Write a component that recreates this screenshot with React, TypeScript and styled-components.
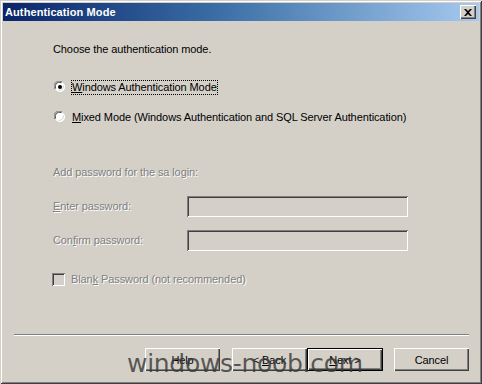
import * as React from "react";
import styled, { createGlobalStyle } from "styled-components";

const Global = createGlobalStyle`
  html, body {
    margin: 0;
    padding: 0;
    background: #d4d0c8;
  }
  body {
    font-family: "Liberation Sans", Arial, sans-serif;
    font-size: 11px;
    letter-spacing: -0.1px;
  }
`;

const Window = styled.div`
  position: relative;
  width: 482px;
  height: 384px;
  box-sizing: border-box;
  background: #d4d0c8;
  box-shadow: inset 1px 1px #d4d0c8, inset -1px -1px #404040,
    inset 2px 2px #ffffff, inset -2px -2px #808080;
  display: flex;
  flex-direction: column;
  overflow: hidden;
  color: #000;
`;

const Caption = styled.div`
  margin: 3px 3px 0 3px;
  height: 18px;
  display: flex;
  align-items: center;
  justify-content: space-between;
  padding: 0 3px 0 2px;
  background: linear-gradient(to right, #0a246a 0%, #3a6ea5 45%, #a6caf0 100%);
`;

const CaptionText = styled.span`
  color: #fff;
  font-weight: bold;
  font-size: 11px;
  letter-spacing: 0.1px;
`;

const CaptionButton = styled.div`
  width: 16px;
  height: 14px;
  box-sizing: border-box;
  background: #d4d0c8;
  box-shadow: inset 1px 1px #fff, inset -1px -1px #404040,
    inset -2px -2px #808080;
  display: flex;
  align-items: center;
  justify-content: center;
`;

const Body = styled.div`
  flex: 1;
  display: flex;
  flex-direction: column;
  padding: 22px 0 0 53px;
`;

const Text = styled.div<{ $disabled?: boolean }>`
  height: 13px;
  line-height: 13px;
  white-space: nowrap;
  color: ${(p) => (p.$disabled ? "#808080" : "#000")};
  text-shadow: ${(p) => (p.$disabled ? "1px 1px 0 #ffffff" : "none")};
`;

const Option = styled.div<{ $top: number }>`
  margin-top: ${(p) => p.$top}px;
  height: 16px;
  display: flex;
  align-items: center;
  margin-left: 1px;
`;

const OptionLabel = styled.span<{ $focus?: boolean }>`
  margin-left: 5px;
  padding: 1px 1px 1px 1px;
  line-height: 13px;
  outline: ${(p) => (p.$focus ? "1px dotted #000" : "none")};
  outline-offset: -1px;
  white-space: nowrap;
`;

const Field = styled.div<{ $top: number }>`
  margin-top: ${(p) => p.$top}px;
  display: grid;
  grid-template-columns: 134px 221px;
  align-items: center;
  height: 21px;
`;

const Edit = styled.div`
  height: 21px;
  box-sizing: border-box;
  background: #d4d0c8;
  box-shadow: inset 1px 1px #808080, inset -1px -1px #ffffff,
    inset 2px 2px #404040, inset -2px -2px #d4d0c8;
`;

const CheckRow = styled.div`
  margin-top: 22px;
  display: flex;
  align-items: center;
  height: 13px;
  margin-left: -1px;
`;

const CheckBox = styled.div`
  width: 13px;
  height: 13px;
  box-sizing: border-box;
  background: #d4d0c8;
  box-shadow: inset 1px 1px #808080, inset -1px -1px #ffffff,
    inset 2px 2px #404040, inset -2px -2px #d4d0c8;
  margin-right: 6px;
`;

const Separator = styled.div`
  margin: 47px 13px 0 14px;
  height: 2px;
  border-top: 1px solid #808080;
  border-bottom: 1px solid #ffffff;
  box-sizing: border-box;
`;

const ButtonBar = styled.div`
  margin-top: 12px;
  display: flex;
  justify-content: flex-end;
  padding-right: 13px;
`;

const Button = styled.div<{ $default?: boolean; $gap: number }>`
  width: ${(p) => (p.$default ? 76 : 75)}px;
  height: 23px;
  margin-left: ${(p) => p.$gap}px;
  box-sizing: border-box;
  display: flex;
  align-items: center;
  justify-content: center;
  background: #d4d0c8;
  font-size: 11px;
  box-shadow: ${(p) =>
    p.$default
      ? "inset 1px 1px #000, inset -1px -1px #000, inset 2px 2px #fff, inset -2px -2px #404040, inset -3px -3px #808080"
      : "inset 1px 1px #fff, inset -1px -1px #404040, inset -2px -2px #808080"};
`;

const Watermark = styled.div`
  position: absolute;
  left: 127px;
  top: 344px;
  font-family: "DejaVu Sans", "Liberation Sans", sans-serif;
  font-size: 25px;
  line-height: 40px;
  color: rgba(58, 58, 58, 0.82);
  letter-spacing: -0.3px;
  pointer-events: none;
`;

const Radio: React.FC<{ checked?: boolean }> = ({ checked }) => (
  <svg width="12" height="12" viewBox="0 0 12 12">
    <path d="M0.5 8 A5.5 5.5 0 0 1 8 0.5" stroke="#808080" fill="none" />
    <circle cx="6" cy="6" r="5" fill="#ffffff" />
    <path d="M10.5 4 A5.5 5.5 0 0 1 4 10.5" stroke="#ffffff" fill="none" />
    <path d="M1.6 7.5 A4.4 4.4 0 0 1 7.5 1.6" stroke="#404040" fill="none" />
    <path d="M9.4 4.5 A4.4 4.4 0 0 1 4.5 9.4" stroke="#d4d0c8" fill="none" />
    {checked && <circle cx="6" cy="6" r="2" fill="#000" />}
  </svg>
);

const U: React.FC<{ children: React.ReactNode }> = ({ children }) => (
  <span style={{ textDecoration: "underline" }}>{children}</span>
);

export default function App() {
  return (
    <Window>
      <Global />
      <Caption>
        <CaptionText>Authentication Mode</CaptionText>
        <CaptionButton>
          <svg width="8" height="7" viewBox="0 0 8 7">
            <path
              d="M0 0h2l2 2 2-2h2L5 3.5 8 7H6L4 5 2 7H0l3-3.5z"
              fill="#000"
            />
          </svg>
        </CaptionButton>
      </Caption>
      <Body>
        <Text>Choose the authentication mode.</Text>
        <Option $top={23}>
          <Radio checked />
          <OptionLabel $focus>
            <U>W</U>indows Authentication Mode
          </OptionLabel>
        </Option>
        <Option $top={14}>
          <Radio />
          <OptionLabel>
            <U>M</U>ixed Mode (Windows Authentication and SQL Server
            Authentication)
          </OptionLabel>
        </Option>
        <Text $disabled style={{ marginTop: 41 }}>
          Add password for the sa login:
        </Text>
        <Field $top={17}>
          <Text $disabled>
            <U>E</U>nter password:
          </Text>
          <Edit />
        </Field>
        <Field $top={13}>
          <Text $disabled>
            Con<U>f</U>irm password:
          </Text>
          <Edit />
        </Field>
        <CheckRow>
          <CheckBox />
          <Text $disabled>
            Blan<U>k</U> Password (not recommended)
          </Text>
        </CheckRow>
      </Body>
      <Separator />
      <ButtonBar>
        <Button $gap={0}>Help</Button>
        <Button $gap={12}>
          &lt;&nbsp;<U>B</U>ack
        </Button>
        <Button $gap={0} $default>
          <U>N</U>ext &gt;
        </Button>
        <Button $gap={11}>Cancel</Button>
      </ButtonBar>
      <div style={{ height: 13 }} />
      <Watermark>windows-noob.com</Watermark>
    </Window>
  );
}
